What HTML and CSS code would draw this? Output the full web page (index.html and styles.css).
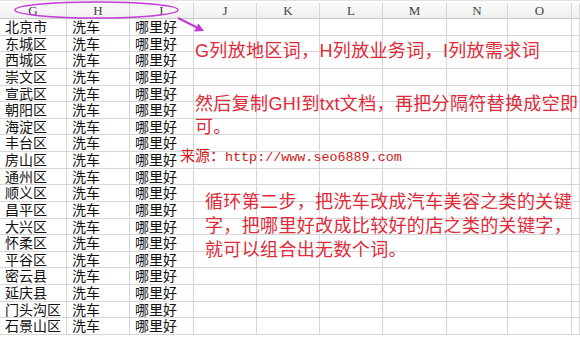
FILE: index.html
```html
<!DOCTYPE html>
<html lang="zh-CN">
<head>
  <meta charset="UTF-8" />
  <title>组合关键词</title>
  <link rel="stylesheet" href="styles.css">
</head>
<body>
  <div class="sheet">
    <div class="row head">
      <span>G</span><span>H</span><span>I</span><span>J</span><span>K</span><span>L</span><span>M</span><span>N</span><span>O</span><span></span>
    </div>
    <div class="row"><span>北京市</span><span>洗车</span><span>哪里好</span><span></span><span></span><span></span><span></span><span></span><span></span><span></span></div>
    <div class="row"><span>东城区</span><span>洗车</span><span>哪里好</span><span></span><span></span><span></span><span></span><span></span><span></span><span></span></div>
    <div class="row"><span>西城区</span><span>洗车</span><span>哪里好</span><span></span><span></span><span></span><span></span><span></span><span></span><span></span></div>
    <div class="row"><span>崇文区</span><span>洗车</span><span>哪里好</span><span></span><span></span><span></span><span></span><span></span><span></span><span></span></div>
    <div class="row"><span>宣武区</span><span>洗车</span><span>哪里好</span><span></span><span></span><span></span><span></span><span></span><span></span><span></span></div>
    <div class="row"><span>朝阳区</span><span>洗车</span><span>哪里好</span><span></span><span></span><span></span><span></span><span></span><span></span><span></span></div>
    <div class="row"><span>海淀区</span><span>洗车</span><span>哪里好</span><span></span><span></span><span></span><span></span><span></span><span></span><span></span></div>
    <div class="row"><span>丰台区</span><span>洗车</span><span>哪里好</span><span></span><span></span><span></span><span></span><span></span><span></span><span></span></div>
    <div class="row"><span>房山区</span><span>洗车</span><span>哪里好</span><span></span><span></span><span></span><span></span><span></span><span></span><span></span></div>
    <div class="row"><span>通州区</span><span>洗车</span><span>哪里好</span><span></span><span></span><span></span><span></span><span></span><span></span><span></span></div>
    <div class="row"><span>顺义区</span><span>洗车</span><span>哪里好</span><span></span><span></span><span></span><span></span><span></span><span></span><span></span></div>
    <div class="row"><span>昌平区</span><span>洗车</span><span>哪里好</span><span></span><span></span><span></span><span></span><span></span><span></span><span></span></div>
    <div class="row"><span>大兴区</span><span>洗车</span><span>哪里好</span><span></span><span></span><span></span><span></span><span></span><span></span><span></span></div>
    <div class="row"><span>怀柔区</span><span>洗车</span><span>哪里好</span><span></span><span></span><span></span><span></span><span></span><span></span><span></span></div>
    <div class="row"><span>平谷区</span><span>洗车</span><span>哪里好</span><span></span><span></span><span></span><span></span><span></span><span></span><span></span></div>
    <div class="row"><span>密云县</span><span>洗车</span><span>哪里好</span><span></span><span></span><span></span><span></span><span></span><span></span><span></span></div>
    <div class="row"><span>延庆县</span><span>洗车</span><span>哪里好</span><span></span><span></span><span></span><span></span><span></span><span></span><span></span></div>
    <div class="row"><span>门头沟区</span><span>洗车</span><span>哪里好</span><span></span><span></span><span></span><span></span><span></span><span></span><span></span></div>
    <div class="row"><span>石景山区</span><span>洗车</span><span>哪里好</span><span></span><span></span><span></span><span></span><span></span><span></span><span></span></div>
  </div>

  <svg class="marks" width="580" height="339" viewBox="0 0 580 339">
    <ellipse cx="96.5" cy="10" rx="81.5" ry="8" fill="none" stroke="#c43ad6" stroke-width="1.5"/>
    <line x1="178" y1="18" x2="198" y2="28" stroke="#c43ad6" stroke-width="2"/>
    <polygon points="204,31 194,31.5 198.5,23.5" fill="#c43ad6"/>
  </svg>

  <p class="note note-cols">G列放地区词，H列放业务词，I列放需求词</p>
  <p class="note note-copy">然后复制GHI到txt文档，再把分隔符替换成空即<br>可。</p>
  <p class="note note-src">来源：<span class="url">http://www.seo6889.com</span></p>
  <p class="note note-loop">循环第二步，把洗车改成汽车美容之类的关键<br>字，把哪里好改成比较好的店之类的关键字，<br>就可以组合出无数个词。</p>
</body>
</html>
```

FILE: styles.css
```css
body {
  margin: 0;
  width: 580px;
  height: 339px;
  overflow: hidden;
  position: relative;
  background: #fff;
  font-family: "Noto Sans CJK SC", sans-serif;
}
.sheet {
  padding-top: 2px;
  border-top: 1px solid #e2e2e2;
}
.row {
  display: grid;
  grid-template-columns: 67px 63px 64px 63px 63px 63px 64px 61px 64px 1fr;
  height: 16.63px;
}
.row span {
  box-sizing: border-box;
  border-right: 1px solid #d6d6d6;
  border-bottom: 1px solid #d6d6d6;
  font-size: 14px;
  line-height: 15.6px;
  padding-left: 5px;
  color: #111;
  white-space: nowrap;
}
.row.head {
  height: 16px;
  background: linear-gradient(#fafafa, #f0f0f0);
}
.row.head span {
  font-family: "Liberation Serif", serif;
  font-size: 13px;
  line-height: 15px;
  color: #444;
  text-align: center;
  padding-left: 0;
  border-bottom-color: #c8c8c8;
}
.marks {
  position: absolute;
  left: 0;
  top: 0;
}
.note {
  position: absolute;
  margin: 0;
  color: #e02a38;
  font-family: "Liberation Sans", "Noto Sans CJK SC", sans-serif;
  font-size: 18px;
  line-height: 23px;
  letter-spacing: 0.35px;
  white-space: nowrap;
}
.note-cols {
  left: 195px;
  top: 40px;
}
.note-copy {
  left: 195px;
  top: 93px;
}
.note-src {
  left: 180px;
  top: 146px;
  font-size: 15px;
  line-height: 20px;
  letter-spacing: 0;
  color: #d01818;
}
.url {
  font-family: "Liberation Mono", monospace;
  font-size: 13.4px;
}
.note-loop {
  left: 205px;
  top: 190px;
  line-height: 24px;
}
```
